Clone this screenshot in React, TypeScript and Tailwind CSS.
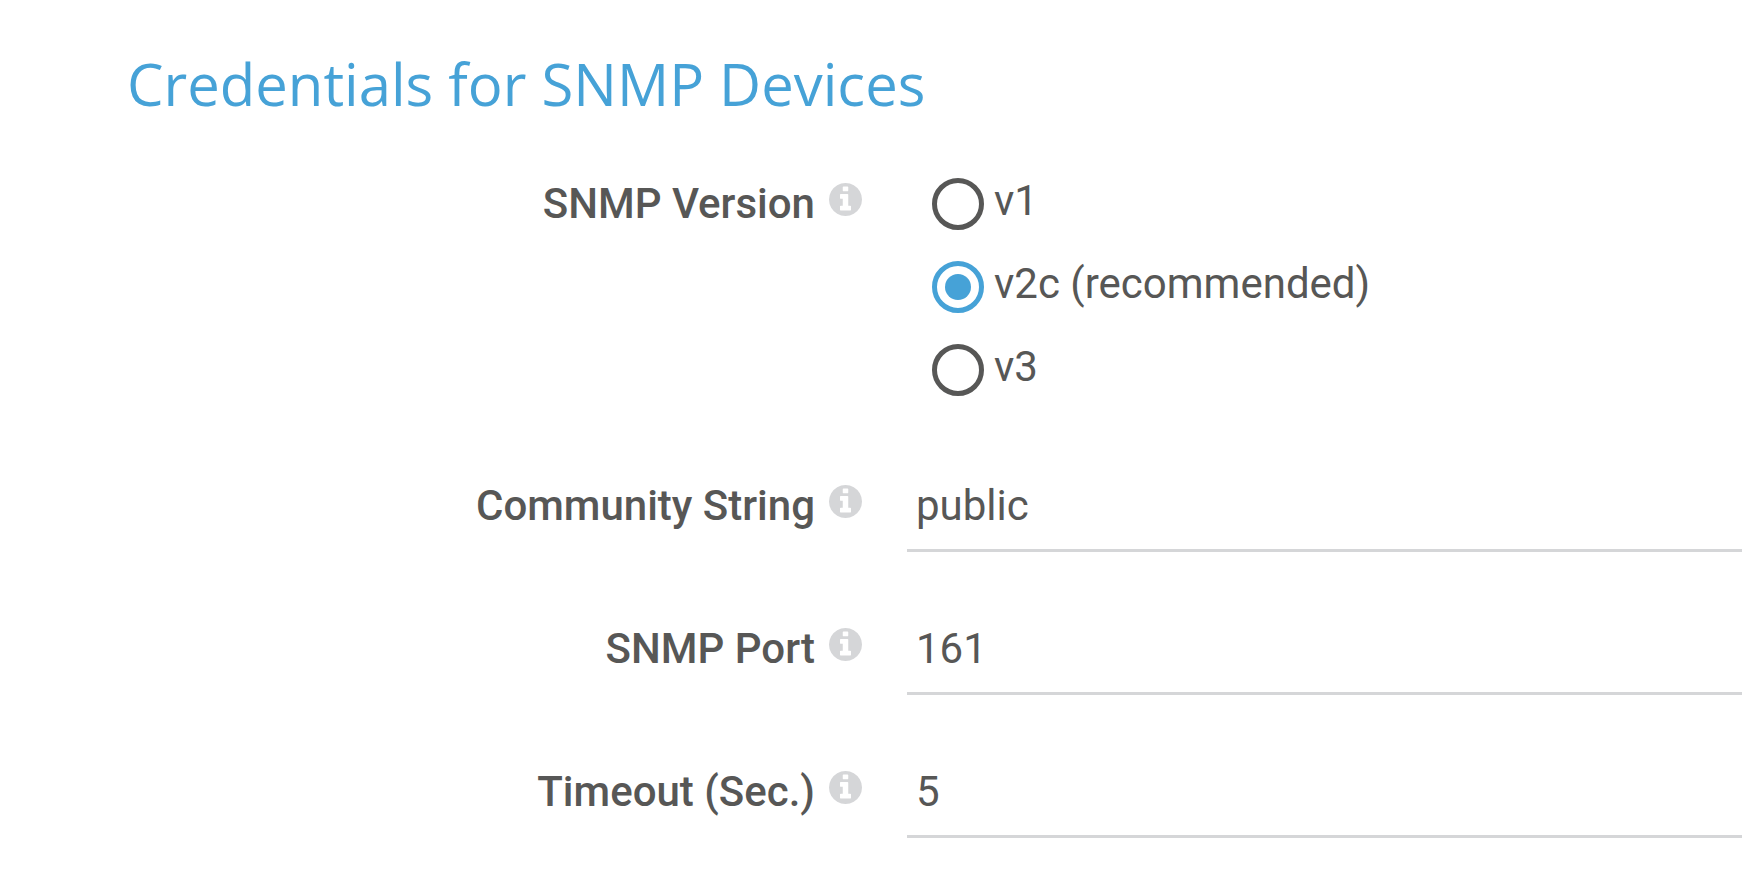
import { useState } from "react";
import type { ReactNode } from "react";

function InfoIcon() {
  return (
    <svg viewBox="0 0 1536 1536" className="mt-[5px] size-[33px] shrink-0 fill-[#d5d6d8]" aria-hidden="true">
      <path d="M1024 1248v-160q0-14-9-23t-23-9h-96V544q0-14-9-23t-23-9H544q-14 0-23 9t-9 23v160q0 14 9 23t23 9h96v320h-96q-14 0-23 9t-9 23v160q0 14 9 23t23 9h448q14 0 23-9t9-23zM896 352V192q0-14-9-23t-23-9H672q-14 0-23 9t-9 23v160q0 14 9 23t23 9h192q14 0 23-9t9-23zM1536 768q0 209-103 385.500T1153.500 1433 768 1536t-385.500-103T103 1153.500 0 768t103-385.500T382.500 103 768 0t385.500 103T1433 382.500 1536 768z" />
    </svg>
  );
}

function Label({ children }: { children: ReactNode }) {
  return (
    <span className="flex w-[862px] shrink-0 justify-end gap-[14px]">
      <span className="text-[42px] leading-[52px] font-medium">{children}</span>
      <InfoIcon />
    </span>
  );
}

function TextRow({ id, label, value }: { id: string; label: string; value: string }) {
  return (
    <div className="flex h-[143px] items-start">
      <label htmlFor={id}>
        <Label>{label}</Label>
      </label>
      <input
        id={id}
        defaultValue={value}
        className="ml-[45px] h-[72px] min-w-0 flex-1 border-b-3 border-[#d5d6d8] px-[9px] pt-px pb-5 text-[42px] leading-[48px] outline-none"
      />
    </div>
  );
}

const versions = ["v1", "v2c (recommended)", "v3"];

export default function App() {
  const [version, setVersion] = useState(versions[1]);
  return (
    <main className="min-h-screen overflow-hidden bg-white pt-11 font-[Roboto,sans-serif] text-[#575756]">
      <h1 className="pl-[127px] font-['Open_Sans',sans-serif] text-[58px] leading-[80px] text-[#46a2d7]">
        Credentials for SNMP Devices
      </h1>
      <form>
        <div role="radiogroup" aria-label="SNMP Version" className="mt-[54px] flex h-[302px] items-start">
          <Label>SNMP Version</Label>
          <div className="ml-[70px] flex flex-col gap-[31px]">
            {versions.map((v) => (
              <label key={v} className="flex h-[52px] items-center gap-[10px] text-[42px] leading-[44px]">
                <input
                  type="radio"
                  name="version"
                  checked={version === v}
                  onChange={() => setVersion(v)}
                  className="size-[52px] appearance-none rounded-full border-5 border-[#575756] checked:border-[#46a2d7] checked:bg-[#46a2d7] checked:bg-clip-content checked:p-2"
                />
                <span className="pb-[6px]">{v}</span>
              </label>
            ))}
          </div>
        </div>
        <TextRow id="community" label="Community String" value="public" />
        <TextRow id="port" label="SNMP Port" value="161" />
        <TextRow id="timeout" label="Timeout (Sec.)" value="5" />
      </form>
    </main>
  );
}
